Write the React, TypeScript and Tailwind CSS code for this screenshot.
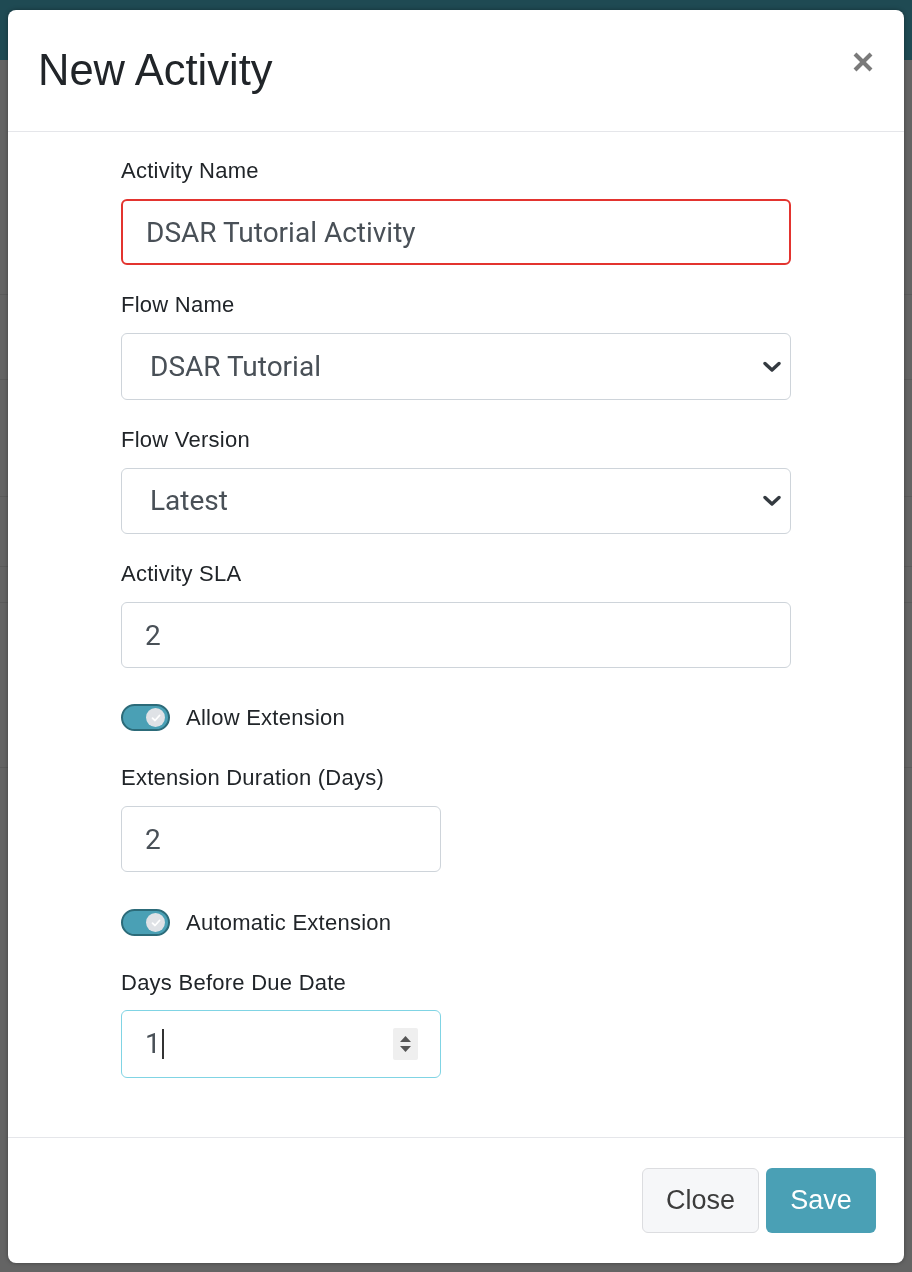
import { useState } from "react"

const sans = { fontFamily: "Roboto, 'Liberation Sans', sans-serif" }
const helv = { fontFamily: "'Liberation Sans', Arial, sans-serif" }

function Chevron() {
  return (
    <svg width="18" height="12" viewBox="0 0 18 12" className="shrink-0">
      <polyline points="2,2.5 9,9 16,2.5" fill="none" stroke="#343a40" strokeWidth="3.4" strokeLinecap="round" strokeLinejoin="round" />
    </svg>
  )
}

function Toggle({ label }: { label: string }) {
  return (
    <div className="flex items-center h-[27px]">
      <div className="w-[49px] h-[27px] rounded-full bg-[#4aa0b5] border-2 border-[#2c6b79] flex items-center justify-end pr-[3px]">
        <div className="w-[19px] h-[19px] rounded-full bg-[#dfe2e6] flex items-center justify-center">
          <svg width="10" height="8" viewBox="0 0 10 8">
            <polyline points="1.5,4.2 4,6.5 8.5,1.5" fill="none" stroke="#ffffff" strokeWidth="1.8" strokeLinecap="round" strokeLinejoin="round" />
          </svg>
        </div>
      </div>
      <span className="ml-[16px] text-[22px] tracking-[0.25px] text-[#212529]" style={helv}>{label}</span>
    </div>
  )
}

function Label({ children, mb = "mb-[16px]" }: { children: React.ReactNode; mb?: string }) {
  return (
    <div className={`text-[22px] tracking-[0.25px] leading-[24px] text-[#212529] ${mb}`} style={helv}>
      {children}
    </div>
  )
}

export default function App() {
  const [name, setName] = useState("DSAR Tutorial Activity")
  const [sla, setSla] = useState("2")
  const [ext, setExt] = useState("2")

  return (
    <div className="min-h-[1272px] bg-[#646464] overflow-hidden" style={sans}>
      {/* page behind the backdrop */}
      <div className="h-[60px] bg-[#1f4a53]" />
      <div className="h-[235px] border-b border-[#5b5b5b]" />
      <div className="h-[85px] border-b border-[#5b5b5b]" />
      <div className="h-[117px] border-b border-[#5b5b5b]" />
      <div className="h-[70px] border-b border-[#5b5b5b]" />
      <div className="h-[36px] border-b border-[#5b5b5b]" />
      <div className="h-[165px] border-b border-[#5b5b5b]" />

      {/* modal */}
      <div className="fixed left-[8px] top-[10px] w-[896px] h-[1253px] bg-white rounded-[8px] shadow-[0_0_4px_rgba(0,0,0,0.35)] flex flex-col">
        <div className="h-[122px] flex items-center justify-between pl-[30px] pr-[30px] border-b border-[#e5e6ea]">
          <h1 className="text-[43.5px] text-[#212529] font-normal" style={helv}>
            New Activity
          </h1>
          <svg width="22" height="22" viewBox="0 0 22 22" className="mt-[-18px]">
            <line x1="3" y1="3" x2="19" y2="19" stroke="#7a7a7a" strokeWidth="4" />
            <line x1="19" y1="3" x2="3" y2="19" stroke="#7a7a7a" strokeWidth="4" />
          </svg>
        </div>

        <div className="flex-1 px-[113px] pt-[27px]">
          <Label>Activity Name</Label>
          <input
            value={name}
            onChange={e => setName(e.target.value)}
            className="w-[670px] h-[66px] rounded-[6px] border-2 border-[#e3342f] px-[23px] text-[28px] text-[#495057] outline-none"
          />

          <div className="mt-[28px]">
            <Label>Flow Name</Label>
            <div className="w-[670px] h-[67px] rounded-[6px] border-[1.5px] border-[#ced4da] flex items-center justify-between pl-[28px] pr-[9px]">
              <span className="text-[28px] text-[#495057]">DSAR Tutorial</span>
              <Chevron />
            </div>
          </div>

          <div className="mt-[28px]">
            <Label>Flow Version</Label>
            <div className="w-[670px] h-[66px] rounded-[6px] border-[1.5px] border-[#ced4da] flex items-center justify-between pl-[28px] pr-[9px]">
              <span className="text-[28px] text-[#495057]">Latest</span>
              <Chevron />
            </div>
          </div>

          <div className="mt-[28px]">
            <Label>Activity SLA</Label>
            <input
              value={sla}
              onChange={e => setSla(e.target.value)}
              className="w-[670px] h-[66px] rounded-[6px] border-[1.5px] border-[#ced4da] px-[23px] text-[28px] text-[#495057] outline-none"
            />
          </div>

          <div className="mt-[36px]">
            <Toggle label="Allow Extension" />
          </div>

          <div className="mt-[35px]">
            <Label>Extension Duration (Days)</Label>
            <input
              value={ext}
              onChange={e => setExt(e.target.value)}
              className="w-[320px] h-[66px] rounded-[6px] border-[1.5px] border-[#ced4da] px-[23px] text-[28px] text-[#495057] outline-none"
            />
          </div>

          <div className="mt-[37px]">
            <Toggle label="Automatic Extension" />
          </div>

          <div className="mt-[35px]">
            <Label mb="mb-[15px]">Days Before Due Date</Label>
            <div className="w-[320px] h-[68px] rounded-[6px] border-[1.5px] border-[#80d4e4] flex items-center justify-between pl-[23px] pr-[22px]">
              <div className="flex items-center">
                <span className="text-[28px] text-[#495057]">1</span>
                <span className="w-[2px] h-[30px] bg-[#333] ml-[1px]" />
              </div>
              <div className="w-[25px] h-[32px] bg-[#efefef] rounded-[2px] flex flex-col items-center justify-center gap-[4px]">
                <svg width="11" height="6" viewBox="0 0 11 6"><polygon points="5.5,0 11,6 0,6" fill="#555" /></svg>
                <svg width="11" height="6" viewBox="0 0 11 6"><polygon points="0,0 11,0 5.5,6" fill="#555" /></svg>
              </div>
            </div>
          </div>
        </div>

        <div className="h-[126px] border-t border-[#e5e6ea] flex items-center justify-end gap-[7px] pr-[28px]">
          <button className="w-[117px] h-[65px] rounded-[6px] bg-[#f6f7f9] border-[1.5px] border-[#dcdde0] text-[27px] text-[#3c3c3c]" style={helv}>
            Close
          </button>
          <button className="w-[110px] h-[65px] rounded-[6px] bg-[#4aa0b5] text-[27px] text-white" style={helv}>
            Save
          </button>
        </div>
      </div>
    </div>
  )
}
